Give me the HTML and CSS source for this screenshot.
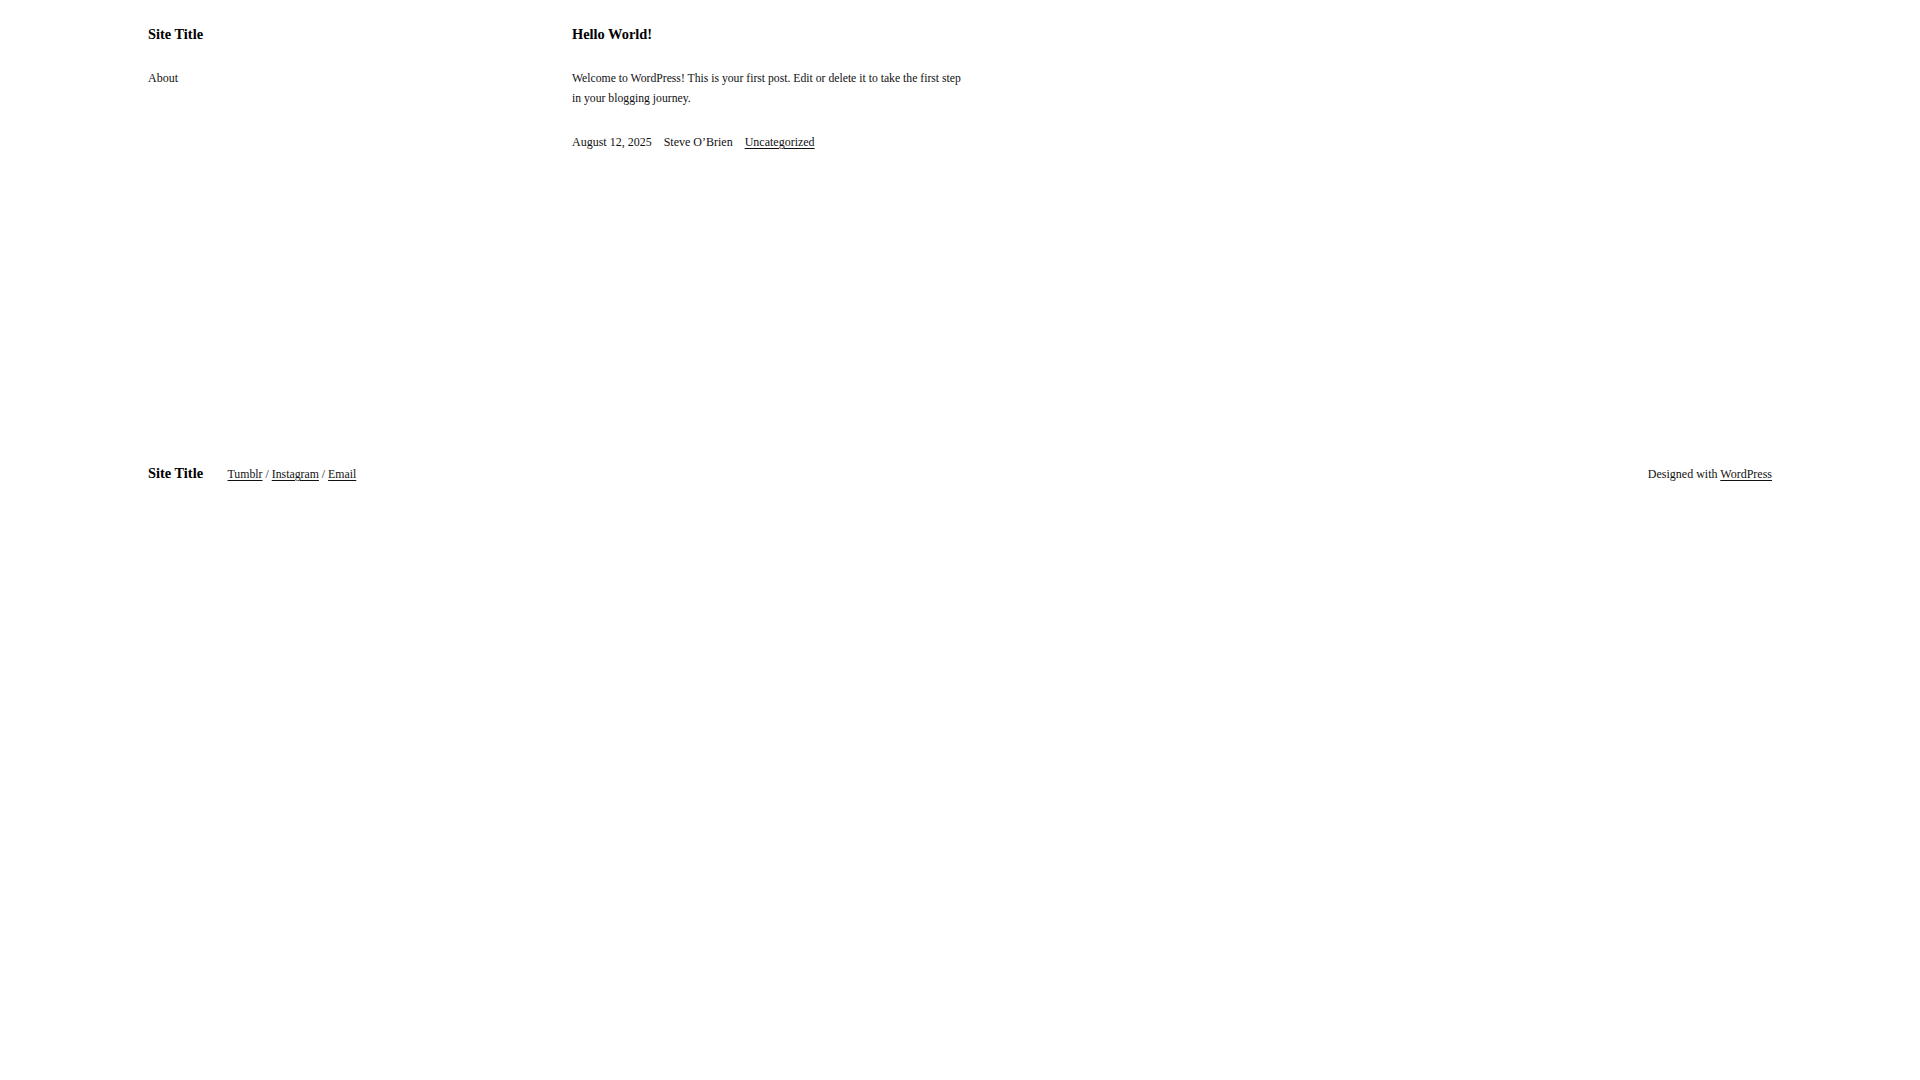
FILE: index.html
```html
<!DOCTYPE html>
<html lang="en">
<head>
<meta charset="utf-8">
<title>Site Title</title>
<link rel="stylesheet" href="styles.css">
</head>
<body>
<div class="page">
  <main class="layout">
    <aside class="sidebar">
      <p class="site-title">Site Title</p>
      <nav class="nav"><a class="nav-link" href="#">About</a></nav>
    </aside>
    <article class="post">
      <h1 class="post-title">Hello World!</h1>
      <p class="post-body">Welcome to WordPress! This is your first post. Edit or delete it to take the first step in your blogging journey.</p>
      <div class="post-meta">
        <span>August 12, 2025</span>
        <span>Steve O’Brien</span>
        <a class="link" href="#">Uncategorized</a>
      </div>
    </article>
  </main>
  <footer class="footer">
    <div class="footer-left">
      <p class="site-title">Site Title</p>
      <div class="social"><a class="link" href="#">Tumblr</a> / <a class="link" href="#">Instagram</a> / <a class="link" href="#">Email</a></div>
    </div>
    <div class="credit">Designed with <a class="link" href="#">WordPress</a></div>
  </footer>
</div>
</body>
</html>
```

FILE: styles.css
```css
html, body {
  margin: 0;
  padding: 0;
  background: #fff;
}
body {
  font-family: "Liberation Serif", "Times New Roman", serif;
  color: #111;
  font-size: 12px;
  line-height: 20px;
}
.page {
  padding: 26px 148px 0;
}
.layout {
  display: flex;
  min-height: 438px;
}
.sidebar {
  flex: 0 0 424px;
  display: flex;
  flex-direction: column;
  gap: 25px;
}
.site-title,
.post-title {
  margin: 0;
  font-size: 14.4px;
  line-height: 17px;
  font-weight: 700;
  color: #000;
}
.nav-link {
  color: #111;
  text-decoration: none;
}
.post {
  width: 400px;
  display: flex;
  flex-direction: column;
  gap: 25px;
}
.post-body {
  margin: 1px 0 -2px;
  font-size: 11.7px;
}
.post-meta {
  display: flex;
  gap: 12px;
}
.link {
  color: #111;
  text-decoration: underline;
  text-underline-offset: 2px;
}
.footer {
  display: flex;
  justify-content: space-between;
  align-items: baseline;
}
.footer-left {
  display: flex;
  align-items: baseline;
  gap: 24.5px;
}
.social {
  font-size: 11.8px;
}
```
